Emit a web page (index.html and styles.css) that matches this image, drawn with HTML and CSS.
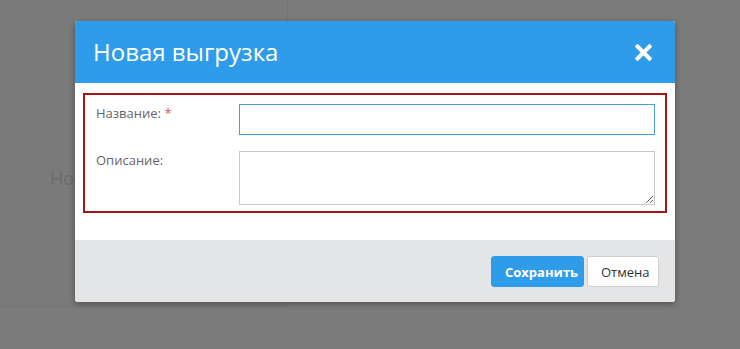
FILE: index.html
```html
<!DOCTYPE html>
<html lang="ru">
<head>
<meta charset="utf-8">
<title>Новая выгрузка</title>
<link rel="stylesheet" href="styles.css">
</head>
<body>
<div class="page">
  <div class="panel">
    <div class="panel-title">Но</div>
  </div>
</div>
<div class="modal">
  <div class="modal-header">
    <div class="modal-title">Новая выгрузка</div>
    <svg class="close" width="17" height="17" viewBox="0 0 17 17" aria-label="Закрыть">
      <path d="M2.5 2.5 L14.5 14.5 M14.5 2.5 L2.5 14.5" stroke="#fff" stroke-width="4" stroke-linecap="square"/>
    </svg>
  </div>
  <div class="modal-body">
    <div class="form-box">
      <div class="form-row">
        <label class="form-label">Название: <span class="req">*</span></label>
        <input class="input focused" type="text">
      </div>
      <div class="form-row">
        <label class="form-label">Описание:</label>
        <textarea class="input textarea"></textarea>
      </div>
    </div>
  </div>
  <div class="modal-footer">
    <button class="btn btn-primary">Сохранить</button>
    <button class="btn btn-default">Отмена</button>
  </div>
</div>
</body>
</html>
```
FILE: styles.css
```css
html, body {
  margin: 0;
  padding: 0;
}
body {
  width: 740px;
  height: 349px;
  overflow: hidden;
  background: #7b7b7b;
  font-family: "Open Sans", "Liberation Sans", sans-serif;
  position: relative;
}
.page {
  display: flex;
}
.panel {
  width: 288px;
  height: 307px;
  border-right: 1px solid #747474;
  border-bottom: 1px solid #747474;
  background: #7a7a7a;
  box-sizing: border-box;
  padding: 166px 0 0 50px;
}
.panel-title {
  font-size: 18px;
  color: #6b6b6b;
  white-space: nowrap;
}
.modal {
  position: absolute;
  left: 75px;
  top: 21px;
  width: 600px;
  background: #fff;
  border-radius: 3px;
  overflow: hidden;
  box-shadow: 0 2px 6px rgba(0,0,0,0.35);
}
.modal-header {
  height: 62px;
  background: #2f9ce9;
  display: flex;
  align-items: center;
  justify-content: space-between;
  padding: 0 23px 0 18px;
}
.modal-title {
  color: #fff;
  font-size: 24px;
  line-height: 30px;
}
.close {
  display: block;
  margin-top: 1px;
}
.modal-body {
  padding: 10px 8px 27px;
}
.form-box {
  border: 2px solid #a31616;
  padding: 9px 10px 6px 10px;
  display: flex;
  flex-direction: column;
  gap: 16px;
}
.form-row {
  display: grid;
  grid-template-columns: 144px 416px;
  align-items: start;
}
.form-label {
  font-size: 13px;
  line-height: 18px;
  color: #666;
  padding-left: 1px;
}
.req {
  color: #d9534f;
}
.input {
  box-sizing: border-box;
  width: 416px;
  height: 31px;
  border: 1px solid #c8c8c8;
  background: #fff;
  margin: 0;
  padding: 4px 8px;
  font-family: inherit;
  font-size: 13px;
  outline: none;
  display: block;
}
.input.focused {
  border-color: #4c9fd4;
}
.textarea {
  height: 54px;
  resize: vertical;
}
.modal-footer {
  height: 62px;
  box-sizing: border-box;
  background: #e4e5e7;
  display: flex;
  justify-content: flex-end;
  align-items: flex-start;
  gap: 3px;
  padding: 16px 16px 0 0;
}
.btn {
  height: 31px;
  box-sizing: border-box;
  border-radius: 3px;
  font-family: inherit;
  font-size: 13px;
  padding: 0 13px;
  margin: 0;
  cursor: pointer;
}
.btn-primary {
  background: #2f9ce9;
  border: 1px solid #2f9ce9;
  color: #fff;
  font-weight: 700;
  width: 93px;
}
.btn-default {
  background: #fff;
  border: 1px solid #cfcfcf;
  color: #333;
  width: 72px;
}
```
